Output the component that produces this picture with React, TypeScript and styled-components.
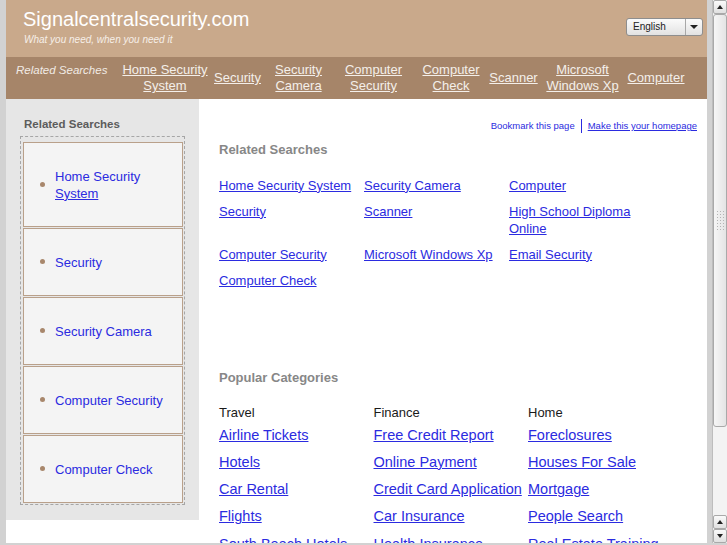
import React from 'react';
import styled, { createGlobalStyle } from 'styled-components';

const GlobalStyle = createGlobalStyle`
  html, body {
    margin: 0;
    padding: 0;
    background: #d2d2d2;
    font-family: "Liberation Sans", Arial, sans-serif;
  }
`;

const Frame = styled.div`
  display: flex;
  width: 727px;
  height: 545px;
  overflow: hidden;
  background: #d2d2d2;
`;

const Page = styled.div`
  margin-left: 6px;
  width: 701px;
  height: 543px;
  background: #fff;
  overflow: hidden;
  display: flex;
  flex-direction: column;
`;

const Header = styled.header`
  height: 57px;
  flex-shrink: 0;
  background: #c9a98b;
  display: flex;
  justify-content: space-between;
  align-items: flex-start;
  padding: 0 4px 0 17px;
  box-sizing: border-box;
`;

const Brand = styled.div`
  padding-top: 8px;
`;

const Title = styled.div`
  color: #fff;
  font-size: 20px;
  line-height: 23px;
`;

const Tagline = styled.div`
  color: #f6efe8;
  font-size: 10px;
  line-height: 12px;
  font-style: italic;
  margin-top: 3px;
  padding-left: 1px;
`;

const LangSelect = styled.div`
  margin-top: 18px;
  width: 77px;
  height: 18px;
  box-sizing: border-box;
  border: 1px solid #8e8e8e;
  border-radius: 3px;
  background: linear-gradient(#fbfbfb, #e2e2e2);
  display: flex;
  align-items: stretch;
  font-size: 10px;
  color: #222;
`;

const LangText = styled.span`
  flex: 1;
  padding-left: 6px;
  line-height: 16px;
`;

const LangArrow = styled.span`
  width: 16px;
  border-left: 1px solid #a8a8a8;
  display: flex;
  align-items: center;
  justify-content: center;
  &::after {
    content: '';
    border-left: 4px solid transparent;
    border-right: 4px solid transparent;
    border-top: 4px solid #222;
  }
`;

const Nav = styled.nav`
  height: 42px;
  flex-shrink: 0;
  background: #a68569;
  display: flex;
  align-items: center;
  padding-left: 10px;
  font-size: 13px;
  line-height: 16px;
`;

const NavLabel = styled.span`
  width: 103px;
  flex-shrink: 0;
  white-space: nowrap;
  color: #f1ebe5;
  font-size: 11.5px;
  font-style: italic;
  margin-top: -17px;
`;

const NavCell = styled.a<{ $w: number }>`
  width: ${p => p.$w}px;
  flex-shrink: 0;
  text-align: center;
  white-space: pre-line;
  color: #f4efea;
  text-decoration: underline;
  cursor: pointer;
`;

const Body = styled.div`
  display: flex;
  align-items: flex-start;
  flex: 1;
`;

const Sidebar = styled.aside`
  width: 193px;
  flex-shrink: 0;
  background: #e6e6e6;
  padding: 18px 14px 15px 14px;
  box-sizing: border-box;
`;

const SideHeading = styled.div`
  font-size: 11.5px;
  line-height: 14px;
  font-weight: bold;
  color: #5c5c5c;
  padding-left: 4px;
`;

const DashedBox = styled.div`
  margin-top: 5px;
  border: 1px dashed #a6a6a6;
  padding: 5px 1px 1px 2px;
  display: flex;
  flex-direction: column;
  gap: 1px;
`;

const SideItem = styled.div`
  border: 1px solid #b9a08a;
  background: #f4f4f4;
  padding: 24.5px 10px 24.5px 31px;
  font-size: 13px;
  line-height: 17px;
  position: relative;
  &::before {
    content: '';
    position: absolute;
    left: 16px;
    top: 50%;
    width: 5px;
    height: 5px;
    margin-top: -3px;
    border-radius: 50%;
    background: #a8876c;
  }
`;

const SideLink = styled.a`
  color: #2b2be0;
  text-decoration: none;
  cursor: pointer;
`;

const Under = styled.span`
  text-decoration: underline;
`;

const Main = styled.main`
  flex: 1;
  padding: 20px 10px 0 20px;
`;

const Toolbar = styled.div`
  display: flex;
  justify-content: flex-end;
  align-items: center;
  font-size: 9.5px;
  line-height: 14px;
`;

const ToolLink = styled.a<{ $underline?: boolean }>`
  color: #2b2be0;
  text-decoration: ${p => (p.$underline ? 'underline' : 'none')};
  cursor: pointer;
`;

const ToolSep = styled.span`
  width: 1px;
  height: 14px;
  background: #2b2be0;
  margin: 0 6px;
`;

const SectionHeading = styled.h2<{ $top: number }>`
  margin: ${p => p.$top}px 0 0 0;
  font-size: 13px;
  line-height: 16px;
  font-weight: bold;
  color: #878787;
`;

const LinkGrid = styled.div`
  margin-top: 18.5px;
  display: grid;
  grid-template-columns: 145px 145px 145px;
  row-gap: 9px;
  font-size: 13px;
  line-height: 17px;
`;

const BlueLink = styled.a`
  color: #2b2be0;
  text-decoration: underline;
  cursor: pointer;
`;

const Categories = styled.div`
  margin-top: 18.5px;
  display: grid;
  grid-template-columns: 154.5px 154.5px 154.5px;
`;

const CatColumn = styled.div`
  display: flex;
  flex-direction: column;
`;

const CatName = styled.div`
  font-size: 13px;
  line-height: 17px;
  color: #1a1a1a;
  margin-bottom: 4.5px;
`;

const CatLinks = styled.div`
  display: flex;
  flex-direction: column;
  gap: 9.25px;
  font-size: 14.5px;
  line-height: 18px;
`;

const CatLink = styled.a`
  color: #2b2be0;
  text-decoration: underline;
  cursor: pointer;
  white-space: nowrap;
`;

const Scrollbar = styled.div`
  margin-left: 5px;
  width: 15px;
  height: 543px;
  background: #f3f3f3;
  border-left: 1px solid #bdbdbd;
  box-sizing: border-box;
  display: flex;
  flex-direction: column;
`;

const ScrollButton = styled.div<{ $down?: boolean }>`
  height: 14px;
  flex-shrink: 0;
  box-sizing: border-box;
  border: 1px solid #a9a9a9;
  border-radius: 2px;
  background: linear-gradient(#fafafa, #e0e0e0);
  display: flex;
  align-items: center;
  justify-content: center;
  &::after {
    content: '';
    border-left: 3.5px solid transparent;
    border-right: 3.5px solid transparent;
    ${p =>
      p.$down ? 'border-top: 4px solid #222;' : 'border-bottom: 4px solid #222;'}
  }
`;

const Thumb = styled.div`
  height: 413px;
  flex-shrink: 0;
  box-sizing: border-box;
  border: 1px solid #a9a9a9;
  border-radius: 3px;
  background: linear-gradient(90deg, #f6f6f6, #e4e4e4);
  display: flex;
  align-items: center;
  justify-content: center;
`;

const Grip = styled.div`
  width: 8px;
  height: 22px;
  background-image: radial-gradient(circle, #b4b4b4 0.8px, transparent 1px);
  background-size: 3px 3px;
`;

const ScrollSpacer = styled.div`
  flex: 1;
`;

const navItems = [
  { text: 'Home Security\nSystem', w: 92 },
  { text: 'Security', w: 53 },
  { text: 'Security\nCamera', w: 69 },
  { text: 'Computer\nSecurity', w: 81 },
  { text: 'Computer\nCheck', w: 74 },
  { text: 'Scanner', w: 51 },
  { text: 'Microsoft\nWindows Xp', w: 87 },
  { text: 'Computer', w: 60 },
];

const sideItems = ['Security', 'Security Camera', 'Computer Security', 'Computer Check'];

const related = [
  'Home Security System',
  'Security Camera',
  'Computer',
  'Security',
  'Scanner',
  'High School Diploma Online',
  'Computer Security',
  'Microsoft Windows Xp',
  'Email Security',
  'Computer Check',
];

const categories = [
  {
    name: 'Travel',
    links: ['Airline Tickets', 'Hotels', 'Car Rental', 'Flights', 'South Beach Hotels'],
  },
  {
    name: 'Finance',
    links: ['Free Credit Report', 'Online Payment', 'Credit Card Application', 'Car Insurance', 'Health Insurance'],
  },
  {
    name: 'Home',
    links: ['Foreclosures', 'Houses For Sale', 'Mortgage', 'People Search', 'Real Estate Training'],
  },
];

export default function App() {
  return (
    <>
      <GlobalStyle />
      <Frame>
        <Page>
          <Header>
            <Brand>
              <Title>Signalcentralsecurity.com</Title>
              <Tagline>What you need, when you need it</Tagline>
            </Brand>
            <LangSelect>
              <LangText>English</LangText>
              <LangArrow />
            </LangSelect>
          </Header>
          <Nav>
            <NavLabel>Related Searches</NavLabel>
            {navItems.map(item => (
              <NavCell key={item.text} $w={item.w}>
                {item.text}
              </NavCell>
            ))}
          </Nav>
          <Body>
            <Sidebar>
              <SideHeading>Related Searches</SideHeading>
              <DashedBox>
                <SideItem>
                  <SideLink>
                    Home Security <Under>System</Under>
                  </SideLink>
                </SideItem>
                {sideItems.map(s => (
                  <SideItem key={s}>
                    <SideLink>{s}</SideLink>
                  </SideItem>
                ))}
              </DashedBox>
            </Sidebar>
            <Main>
              <Toolbar>
                <ToolLink>Bookmark this page</ToolLink>
                <ToolSep />
                <ToolLink $underline>Make this your homepage</ToolLink>
              </Toolbar>
              <SectionHeading $top={9}>Related Searches</SectionHeading>
              <LinkGrid>
                {related.map(r => (
                  <div key={r}>
                    <BlueLink>{r}</BlueLink>
                  </div>
                ))}
              </LinkGrid>
              <SectionHeading $top={81}>Popular Categories</SectionHeading>
              <Categories>
                {categories.map(c => (
                  <CatColumn key={c.name}>
                    <CatName>{c.name}</CatName>
                    <CatLinks>
                      {c.links.map(l => (
                        <div key={l}>
                          <CatLink>{l}</CatLink>
                        </div>
                      ))}
                    </CatLinks>
                  </CatColumn>
                ))}
              </Categories>
            </Main>
          </Body>
        </Page>
        <Scrollbar>
          <ScrollButton />
          <Thumb>
            <Grip />
          </Thumb>
          <ScrollSpacer />
          <ScrollButton />
          <ScrollButton $down />
        </Scrollbar>
      </Frame>
    </>
  );
}
